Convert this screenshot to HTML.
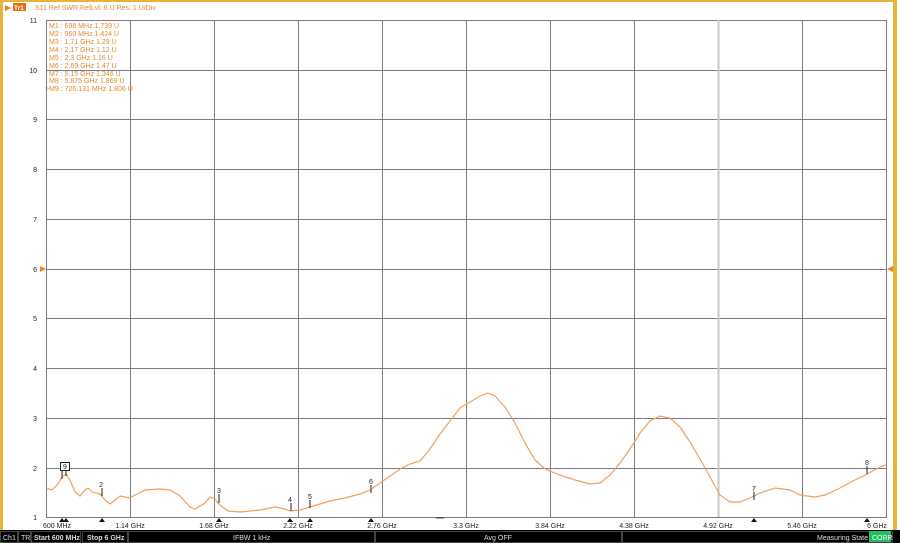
<!DOCTYPE html>
<html><head><meta charset="utf-8"><style>
html,body{margin:0;padding:0;width:900px;height:543px;overflow:hidden;background:#fff;font-family:"Liberation Sans",sans-serif}
</style></head><body>
<svg width="900" height="543" xmlns="http://www.w3.org/2000/svg" style="position:absolute;left:0;top:0">
<rect x="0" y="0" width="900" height="543" fill="#fff"/>
<rect x="0" y="0" width="3" height="530" fill="#e8b33a"/>
<rect x="0" y="0" width="897" height="2" fill="#e8b33a"/>
<rect x="893" y="0" width="4" height="530" fill="#e8b33a"/>
<g stroke="#7a7a8a" stroke-width="1" fill="none">
<rect x="46.5" y="20.5" width="840" height="497"/>
<line x1="130.5" y1="20" x2="130.5" y2="517"/><line x1="214.5" y1="20" x2="214.5" y2="517"/>
<line x1="298.5" y1="20" x2="298.5" y2="517"/><line x1="382.5" y1="20" x2="382.5" y2="517"/>
<line x1="466.5" y1="20" x2="466.5" y2="517"/><line x1="550.5" y1="20" x2="550.5" y2="517"/>
<line x1="634.5" y1="20" x2="634.5" y2="517"/><line x1="802.5" y1="20" x2="802.5" y2="517"/>
<line x1="46" y1="70.5" x2="886" y2="70.5"/><line x1="46" y1="119.5" x2="886" y2="119.5"/>
<line x1="46" y1="169.5" x2="886" y2="169.5"/><line x1="46" y1="219.5" x2="886" y2="219.5"/>
<line x1="46" y1="269.5" x2="886" y2="269.5"/><line x1="46" y1="318.5" x2="886" y2="318.5"/>
<line x1="46" y1="368.5" x2="886" y2="368.5"/><line x1="46" y1="418.5" x2="886" y2="418.5"/>
<line x1="46" y1="468.5" x2="886" y2="468.5"/>
</g>
<line x1="718.5" y1="20" x2="718.5" y2="517" stroke="#c8c8cc" stroke-width="2"/>
<g font-size="7" fill="#222" text-anchor="end">
<text x="37" y="23">11</text><text x="37" y="73">10</text><text x="37" y="122">9</text><text x="37" y="172">8</text>
<text x="37" y="222">7</text><text x="37" y="272">6</text><text x="37" y="321">5</text><text x="37" y="371">4</text>
<text x="37" y="421">3</text><text x="37" y="471">2</text><text x="37" y="520">1</text>
</g>
<polygon points="40,266 46,269 40,272" fill="#f08020"/>
<polygon points="893,266 887,269 893,272" fill="#f08020"/>
<polygon points="5,5 11,8 5,11" fill="#f08020"/>
<rect x="13" y="3" width="13" height="8" fill="#e07010"/>
<text x="14" y="10" font-size="6.5" fill="#fff" font-weight="bold">Tr1</text>
<text x="35" y="10" font-size="7" fill="#e08a30">S11 Ref SWR RefLvl: 6  U Res: 1  U/Div</text>
<g font-size="7" fill="#e08a30">
<text x="49" y="28">M1 :  698 MHz  1.739  U</text>
<text x="49" y="36">M2 :  960 MHz  1.424  U</text>
<text x="49" y="44">M3 :  1.71 GHz  1.29  U</text>
<text x="49" y="52">M4 :  2.17 GHz  1.12  U</text>
<text x="49" y="60">M5 :  2.3 GHz  1.16  U</text>
<text x="49" y="68">M6 :  2.69 GHz  1.47  U</text>
<text x="49" y="76">M7 :  5.15 GHz  1.346  U</text>
<text x="49" y="83">M8 :  5.875 GHz  1.869  U</text>
<text x="45" y="91">&gt;M9 :  726.131 MHz  1.806  U</text>
</g>
<polyline fill="none" stroke="#f0a060" stroke-width="1.2" points="46,488 52,490 58,484 62,477 66,474 70,480 75,492 80,496 85,490 88,488 92,492 100,494 105,500 110,504 115,500 120,496 125,497 130,498 135,495 145,490 160,489 170,490 180,496 190,507 195,509 200,506 205,503 210,497 215,499 220,505 228,511 240,512 260,510 275,507 285,509 290,511 300,510 310,507 330,501 345,498 360,494 370,490 380,483 390,476 400,469 410,464 420,461 430,449 440,434 450,421 460,408 470,402 480,396 488,393 495,396 505,407 515,423 525,443 535,460 545,469 560,475 575,480 590,484 600,483 610,475 620,463 630,449 640,433 650,421 660,416 670,418 680,427 690,442 700,459 710,477 720,495 730,502 740,502 750,498 760,493 775,488 790,490 800,495 815,497 825,495 840,488 855,480 867,474 880,467 886,465"/>
<g stroke="#222" stroke-width="1">
<line x1="62" y1="470" x2="62" y2="479"/><line x1="66" y1="470" x2="66" y2="476"/>
<line x1="102" y1="488" x2="102" y2="496"/><line x1="219" y1="494" x2="219" y2="503"/>
<line x1="291" y1="503" x2="291" y2="511"/><line x1="310" y1="500" x2="310" y2="508"/>
<line x1="371" y1="485" x2="371" y2="493"/><line x1="754" y1="492" x2="754" y2="500"/>
<line x1="867" y1="466" x2="867" y2="474"/>
</g>
<rect x="60.5" y="462.5" width="9" height="8" fill="#fff" stroke="#222"/>
<g font-size="7" fill="#222" text-anchor="middle">
<text x="65" y="469">9</text><text x="101" y="487">2</text><text x="219" y="493">3</text>
<text x="290" y="502">4</text><text x="310" y="499">5</text><text x="371" y="484">6</text>
<text x="754" y="491">7</text><text x="867" y="465">8</text>
</g>
<g fill="#111">
<polygon points="59,522 62,518 65,522"/><polygon points="63,522 66,518 69,522"/>
<polygon points="99,522 102,518 105,522"/><polygon points="216,522 219,518 222,522"/>
<polygon points="287,522 290,518 293,522"/><polygon points="307,522 310,518 313,522"/>
<polygon points="368,522 371,518 374,522"/><polygon points="751,522 754,518 757,522"/>
<polygon points="864,522 867,518 870,522"/>
</g>
<rect x="436" y="517" width="8" height="1.5" fill="#555"/>
<g font-size="7" fill="#222" text-anchor="middle">
<text x="57" y="528">600 MHz</text><text x="130" y="528">1.14 GHz</text><text x="214" y="528">1.68 GHz</text>
<text x="298" y="528">2.22 GHz</text><text x="382" y="528">2.76 GHz</text><text x="466" y="528">3.3 GHz</text>
<text x="550" y="528">3.84 GHz</text><text x="634" y="528">4.38 GHz</text><text x="718" y="528">4.92 GHz</text>
<text x="802" y="528">5.46 GHz</text><text x="877" y="528">6 GHz</text>
</g>
<rect x="0" y="530" width="900" height="13" fill="#000"/>
<g fill="none" stroke="#444" stroke-width="1">
<rect x="0.5" y="531.5" width="17" height="11"/><rect x="18.5" y="531.5" width="12" height="11"/>
<rect x="31.5" y="531.5" width="49" height="11"/><rect x="82.5" y="531.5" width="45" height="11"/>
<rect x="128.5" y="531.5" width="246" height="11"/><rect x="375.5" y="531.5" width="246" height="11"/>
<rect x="622.5" y="531.5" width="270" height="11"/>
</g>
<g font-size="7" fill="#ddd">
<text x="3" y="540">Ch1</text><text x="21" y="540">TR</text>
<text x="34" y="540" font-weight="bold">Start 600 MHz</text>
<text x="87" y="540" font-weight="bold">Stop 6 GHz</text>
<text x="233" y="540">IFBW 1 kHz</text><text x="484" y="540">Avg OFF</text>
<text x="817" y="540">Measuring State</text>
</g>
<rect x="869" y="531" width="22" height="11" fill="#20c060"/>
<text x="872" y="540" font-size="7" fill="#fff">CORR</text>
</svg>
</body></html>
